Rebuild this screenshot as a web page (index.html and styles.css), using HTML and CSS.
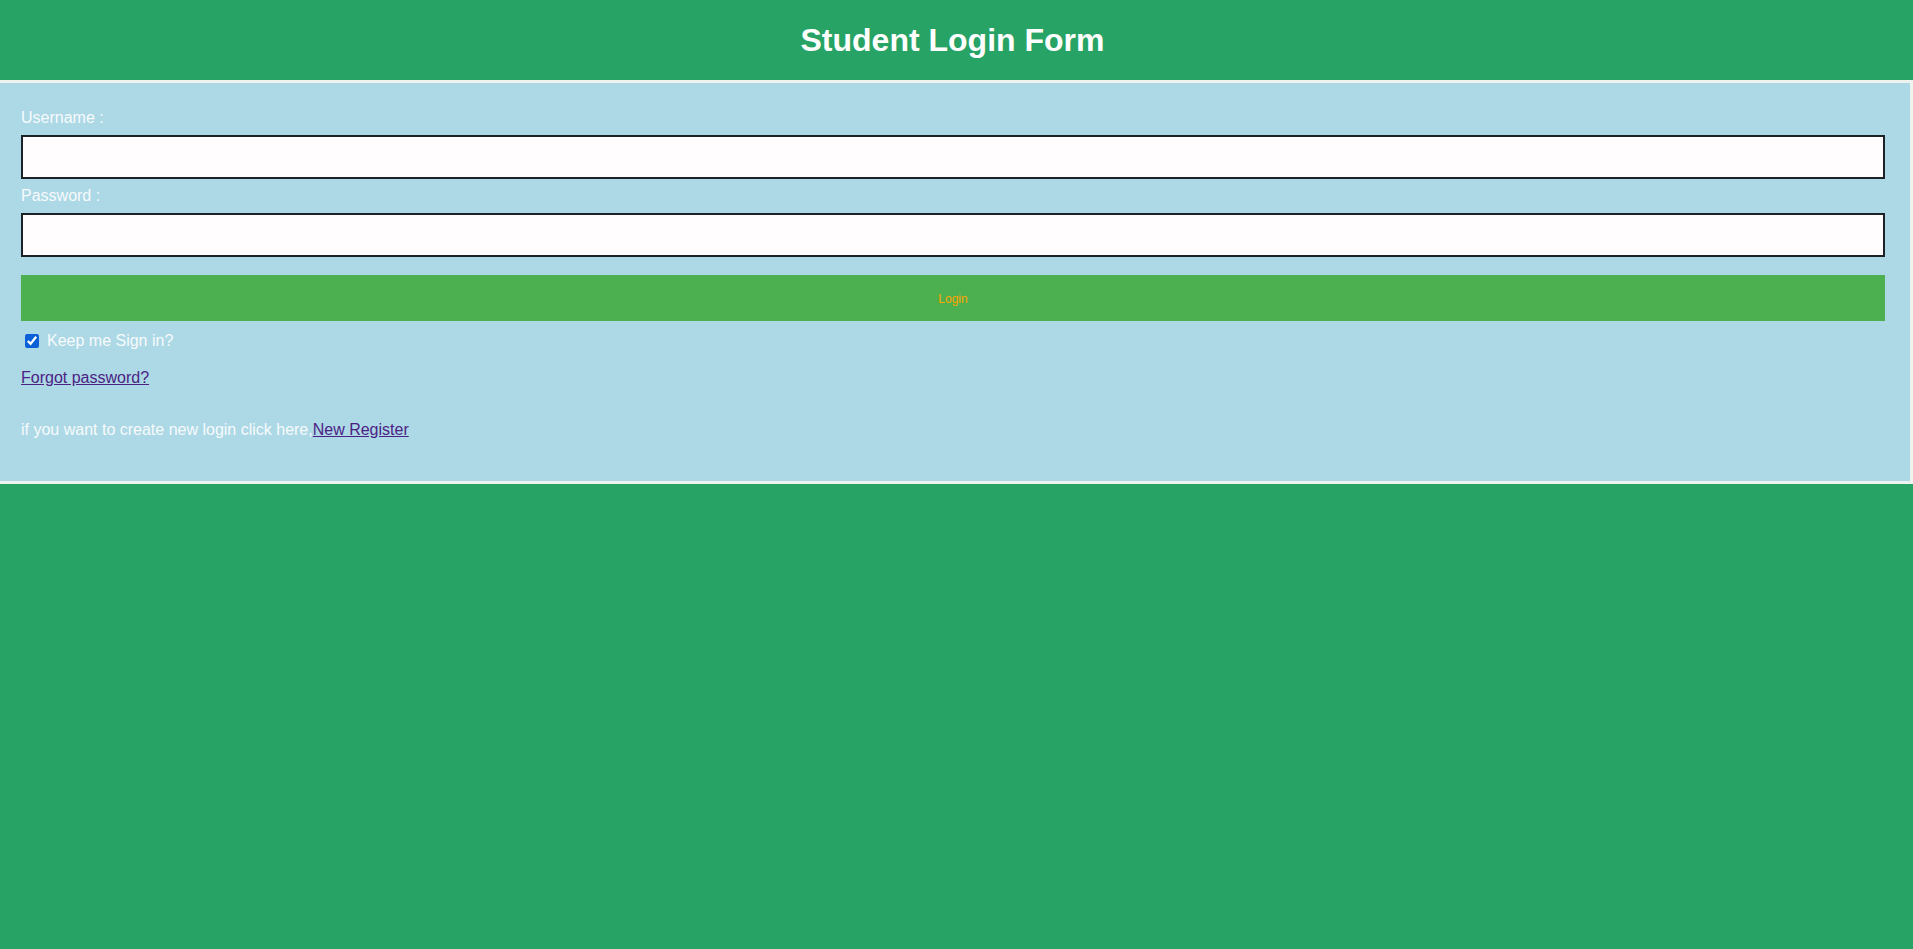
FILE: index.html
```html
<!DOCTYPE html>
<html lang="en">
<head>
<meta charset="utf-8">
<title>Student Login Form</title>
<link rel="stylesheet" href="styles.css">
</head>
<body>
<header class="header">
  <h1 class="title">Student Login Form</h1>
</header>
<form class="login-box">
  <label class="field-label" for="username">Username : </label>
  <input class="field-input" id="username" type="text">
  <label class="field-label" for="password">Password : </label>
  <input class="field-input" id="password" type="password">
  <button class="login-btn" type="button">Login</button>
  <label class="remember"><input class="remember-check" type="checkbox" checked> Keep me Sign in?</label>
  <div class="forgot-row"><a class="link" href="#">Forgot password?</a></div>
  <p class="register">if you want to create new login click here,<a class="link" href="#">New Register</a></p>
</form>
</body>
</html>
```

FILE: styles.css
```css
html, body {
  margin: 0;
  padding: 0;
}
body {
  background: #27a465;
  font-family: "Liberation Sans", Arial, sans-serif;
  font-size: 16px;
  min-height: 949px;
}
.header {
  height: 80px;
  display: flex;
  align-items: center;
  justify-content: center;
  padding-right: 8px;
}
.title {
  margin: 0;
  color: #ffffff;
  font-size: 32px;
  font-weight: bold;
  line-height: 37px;
  padding-top: 1px;
}
.login-box {
  display: flex;
  flex-direction: column;
  align-items: stretch;
  background: #add8e6;
  border-top: 3px solid #eef3f0;
  border-right: 3px solid #eef3f0;
  border-bottom: 3px solid #eef3f0;
  padding: 26px 25px 42px 21px;
  margin: 0;
}
.field-label {
  display: block;
  color: #f7fbfc;
  line-height: 18px;
}
.field-input {
  display: block;
  box-sizing: border-box;
  width: 100%;
  height: 44px;
  margin: 8px 0;
  padding: 12px 20px;
  border: 2px solid #1c2226;
  background: #fffdfd;
  font-size: 16px;
  outline: none;
}
.login-btn {
  margin-top: 10px;
  height: 46px;
  border: none;
  background: #4caf50;
  color: #ffa500;
  font-family: "Liberation Sans", Arial, sans-serif;
  font-size: 12px;
  padding: 2px 0 0 0;
  cursor: pointer;
}
.remember {
  display: flex;
  align-items: center;
  margin-top: 11px;
  color: #f7fbfc;
  line-height: 18px;
}
.remember-check {
  width: 14px;
  height: 14px;
  margin: 0 8px 0 4px;
  accent-color: #0b5fd7;
}
.forgot-row {
  margin-top: 19px;
  line-height: 18px;
}
.link {
  color: #4b2283;
  text-decoration: underline;
}
.register {
  margin: 34px 0 0 0;
  color: #f7fbfc;
  line-height: 18px;
}
```
